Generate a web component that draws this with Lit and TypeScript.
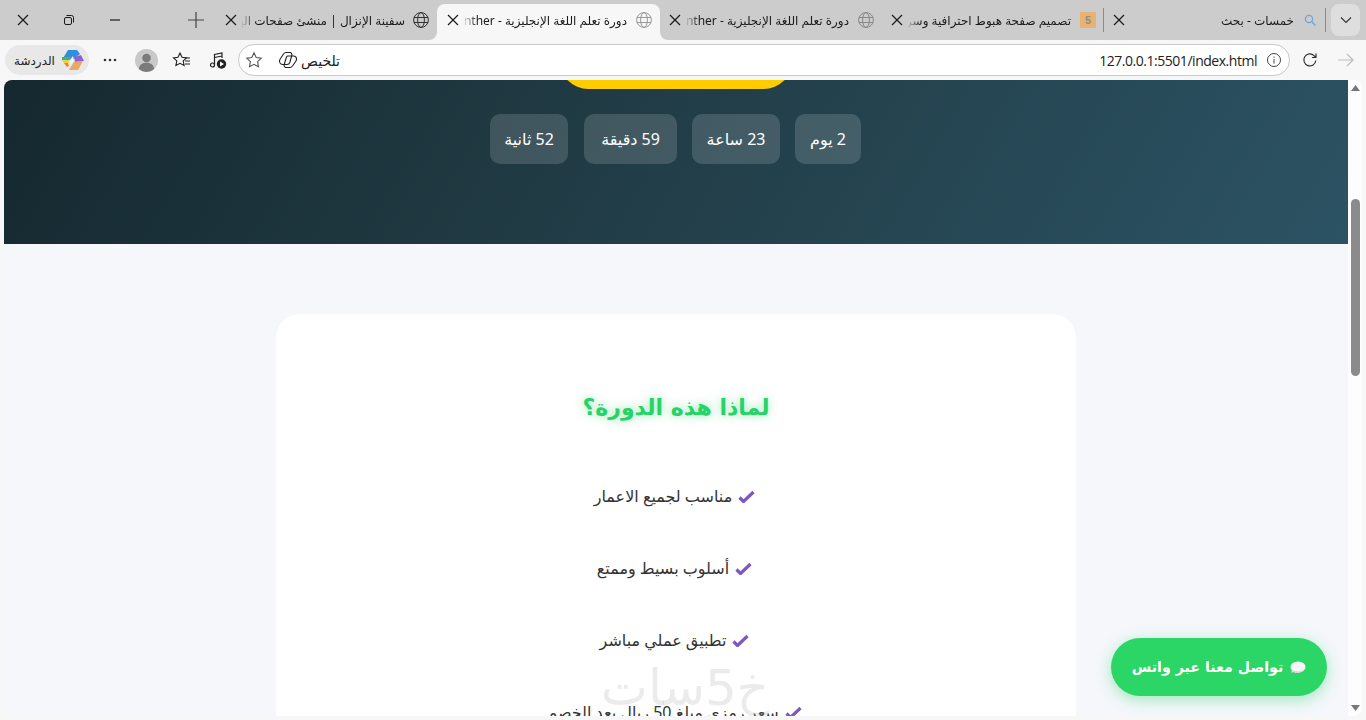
import { LitElement, html, css } from "lit";
import { customElement } from "lit/decorators.js";

const closeIcon = html`<svg class="x" width="12" height="12" viewBox="0 0 12 12"><path d="M1 1l10 10M11 1L1 11" stroke="#1a1a1a" stroke-width="1.2" fill="none"/></svg>`;
const globe = (c: string) => html`<svg class="fav" width="16" height="16" viewBox="0 0 16 16" fill="none" stroke="${c}" stroke-width="1"><circle cx="8" cy="8" r="7.4"/><ellipse cx="8" cy="8" rx="3.4" ry="7.4"/><path d="M1 5.5h14M1 10.5h14"/></svg>`;
const check = html`<svg class="check" width="17" height="13" viewBox="0 0 17 13"><path d="M1.5 7.5l4 4L15.5 2" fill="none" stroke="#7e57c2" stroke-width="3.2" stroke-linejoin="round"/></svg>`;

@customElement("app-root")
export class AppRoot extends LitElement {
  static styles = css`
    :host { display: flex; flex-direction: column; width: 1366px; height: 720px; overflow: hidden; position: relative; background: #f7f7f7; font-family: "Noto Sans", "DejaVu Sans", sans-serif; }
    .strip { display: flex; height: 40px; background: #cccccc; flex: none; }
    .win { width: 46px; display: flex; align-items: center; justify-content: center; }
    .newtab { width: 80px; display: flex; align-items: center; justify-content: flex-end; padding-right: 14px; box-sizing: border-box; }
    .tabs { display: flex; background: #f7f7f7; }
    .tab { display: flex; align-items: center; background: #cccccc; height: 40px; box-sizing: border-box; padding: 0 8px 0 9px; color: #1a1a1a; font-size: 12px; position: relative; }
    .tab .x { flex: none; }
    .tab .title { flex: 1; min-width: 0; margin: 0 9px 0 4px; overflow: hidden; white-space: nowrap; direction: rtl; text-align: right; -webkit-mask-image: linear-gradient(to right, transparent 0, #000 14px); mask-image: linear-gradient(to right, transparent 0, #000 14px); }
    .tab .fav { flex: none; }
    .w1 { width: 219px; padding-left: 7px; border-bottom-right-radius: 8px; }
    .w1 .title, .w5 .title { margin-right: 8px; }
    .w2 { width: 223px; padding: 0; }
    .w3 { width: 222px; border-bottom-left-radius: 8px; }
    .w4, .w5 { width: 222px; }
    .w4::after, .w5::after { content: ""; position: absolute; right: 0; top: 8px; height: 24px; width: 1px; background: #8c8c8c; }
    .active { display: flex; align-items: center; width: 100%; height: 36px; margin-top: 4px; padding: 0 8px 4px 10px; box-sizing: border-box; background: #f7f7f7; border-radius: 8px 8px 0 0; }
    .favbox { width: 16px; height: 16px; background: #e9b36f; color: #8d8d8d; font: 700 11px/16px "Liberation Sans", sans-serif; text-align: center; flex: none; }
    .drop { width: 29px; height: 32px; margin: 4px 0 0 5px; background: #dedede; border-radius: 8px; display: flex; align-items: center; justify-content: center; flex: none; }

    .bar { display: flex; align-items: center; height: 40px; flex: none; }
    .pill { width: 84px; height: 30px; margin-left: 5px; background: #e8e8e8; border-radius: 15px; display: flex; align-items: center; justify-content: space-between; padding: 0 5px 0 9px; box-sizing: border-box; font-size: 12px; color: #222; direction: ltr; flex: none; }
    .tool { width: 36px; display: flex; align-items: center; justify-content: center; flex: none; }
    .addr { width: 1052px; height: 32px; box-sizing: border-box; margin-left: 2px; border: 1px solid #c9c9c9; border-radius: 16px; background: #fff; display: flex; align-items: center; padding: 0 7px 0 6px; flex: none; font-size: 14px; color: #222; }
    .addr .sum { display: flex; align-items: center; gap: 3px; margin-left: 15px; }
    .url { margin-left: auto; font: 14px "Open Sans", "Liberation Sans", sans-serif; color: #222; margin-right: 9px; letter-spacing: -0.47px; }

    .frame { flex: none; height: 636px; margin: 0 4px; display: flex; border-radius: 8px; overflow: hidden; position: relative; }
    .page { width: 1344px; flex: none; background: #f5f7fb; overflow: hidden; direction: rtl; display: flex; flex-direction: column; align-items: center; font-family: "DejaVu Sans", sans-serif; }
    .hero { width: 100%; height: 164px; flex: none; display: flex; flex-direction: column; align-items: center; background: linear-gradient(120deg, #15282f 0%, #203a43 40%, #2c5364 100%); overflow: hidden; }
    .cta { width: 234px; height: 59px; margin-top: -50px; flex: none; background: #ffcc00; border-radius: 30px; }
    .timer { display: flex; gap: 15px; margin-top: 25px; margin-right: 1px; }
    .cell { height: 50px; display: flex; align-items: center; justify-content: center; border-radius: 10px; background: rgba(255,255,255,.15); color: #fff; font: 16px "Noto Sans", "DejaVu Sans", sans-serif; white-space: nowrap; box-sizing: border-box; }
    .c1 { width: 66px; }
    .c2 { width: 88px; }
    .c3 { width: 93px; margin-left: 1px; }
    .c4 { width: 78px; }
    .card { width: 800px; margin-top: 70px; background: #fff; border-radius: 24px; padding: 70px 0 0; box-sizing: border-box; flex: none; display: flex; flex-direction: column; align-items: center; }
    h2 { margin: 1px 0 -1px; font-size: 22px; line-height: 46px; font-weight: 700; color: #25d366; text-shadow: 0 0 10px rgba(37,211,102,.5); }
    ul { list-style: none; margin: 30px 0 0; padding: 0; }
    li { height: 72px; display: flex; align-items: center; justify-content: center; gap: 6px; padding-right: 3px; font: 16px "Noto Sans", "DejaVu Sans", sans-serif; color: #333; white-space: nowrap; }
    .wm { position: absolute; left: 586px; top: 578px; width: 190px; text-align: center; font: 50px/60px "DejaVu Sans", sans-serif; direction: rtl; color: rgba(170,170,170,.24); pointer-events: none; }
    .fab { position: absolute; left: 1107px; top: 558px; width: 216px; height: 58px; border-radius: 29px; background: #2bd566; box-shadow: 0 4px 15px rgba(37,211,102,.4); color: #fff; font: 700 14.2px "DejaVu Sans", sans-serif; display: flex; align-items: center; justify-content: center; gap: 7px; direction: rtl; white-space: nowrap; }
    .sb { width: 14px; flex: none; background: #fdfdfd; display: flex; flex-direction: column; align-items: center; }
    .thumb { width: 9px; height: 177px; margin-top: 108px; border-radius: 5px; background: #8b8b8b; flex: none; }
    .arr { flex: none; margin-top: 5px; }
    .arr.d { margin-top: auto; margin-bottom: 5px; }
  `;

  private tabTitle(t: string) { return html`<span class="title">${t}</span>`; }

  render() {
    const T = "دورة تعلم اللغة الإنجليزية - Panther";
    return html`
      <div class="strip">
        <div class="win">${closeIcon}</div>
        <div class="win"><svg width="12" height="12" viewBox="0 0 12 12" fill="none" stroke="#1a1a1a"><rect x="1.5" y="3.5" width="7" height="7" rx="1.5"/><path d="M3.5 1.5h5a2 2 0 0 1 2 2v5"/></svg></div>
        <div class="win"><svg width="12" height="12" viewBox="0 0 12 12"><path d="M1 6h10" stroke="#1a1a1a" stroke-width="1.2"/></svg></div>
        <div class="newtab"><svg width="16" height="16" viewBox="0 0 16 16"><path d="M8 0v16M0 8h16" stroke="#444" stroke-width="1.2"/></svg></div>
        <div class="tabs">
          <div class="tab w1">${closeIcon}${this.tabTitle("سفينة الإنزال | منشئ صفحات الهبوط")}${globe("#333")}</div>
          <div class="tab w2"><div class="active">${closeIcon}${this.tabTitle(T)}${globe("#999")}</div></div>
          <div class="tab w3">${closeIcon}${this.tabTitle(T)}${globe("#888")}</div>
          <div class="tab w4">${closeIcon}${this.tabTitle("تصميم صفحة هبوط احترافية وسريعة")}<span class="favbox">5</span></div>
          <div class="tab w5">${closeIcon}${this.tabTitle("خمسات - بحث")}<svg class="fav" width="16" height="16" viewBox="0 0 16 16" fill="none" stroke="#6fa3d8" stroke-width="1.3"><circle cx="7" cy="7" r="3.6"/><path d="M10 10l3.5 3.5"/></svg></div>
        </div>
        <div class="drop"><svg width="12" height="8" viewBox="0 0 12 8"><path d="M1 1.5l5 5 5-5" fill="none" stroke="#333" stroke-width="1.1"/></svg></div>
      </div>

      <div class="bar">
        <div class="pill"><span>الدردشة</span>
          <svg width="23" height="22" viewBox="0 0 23 22"><path d="M7 1h9l3 4-8 6H1z" fill="#2f8fdc"/><path d="M1 8h9l-1 3H1z" fill="#3fb37f"/><path d="M1 11h8l-2 3H3z" fill="#f2cf3c"/><path d="M3 14h4l1 3-2 1z" fill="#e8862f"/><path d="M9 11l3-4 1 5-3 4z" fill="#f3f3f3"/><path d="M13 8l7-2 3 6-9 1z" fill="#8f62cf"/><path d="M13 13l9-1-5 9H8l3-5z" fill="#e9a866"/></svg></div>
        <div class="tool" style="margin-left:3px"><svg width="14" height="4" viewBox="0 0 14 4" fill="#333"><circle cx="2" cy="2" r="1.3"/><circle cx="7" cy="2" r="1.3"/><circle cx="12" cy="2" r="1.3"/></svg></div>
        <div class="tool"><svg width="23" height="23" viewBox="0 0 23 23"><circle cx="11.5" cy="11.5" r="11.5" fill="#c9c9c9"/><circle cx="11.5" cy="9" r="4.3" fill="#7b7b7b"/><path d="M3.8 20c1-5 4-6.200 7.700-6.200s6.700 1.200 7.700 6.200a11.500 11.500 0 0 1-15.400 0z" fill="#7b7b7b"/></svg></div>
        <div class="tool"><svg width="20" height="18" viewBox="0 0 20 18" fill="none" stroke="#222" stroke-width="1.1"><path d="M8 2l2 4.300 4.500.6-3.300 3 .9 4.600L8 12.300 3.900 14.500l.9-4.600-3.300-3L6 6.300z"/><path d="M13 7h5M13 10h5M13 13h5"/></svg></div>
        <div class="tool"><svg width="18" height="18" viewBox="0 0 18 18" fill="none" stroke="#222" stroke-width="1.2"><circle cx="3.500" cy="14" r="2"/><path d="M5.500 14V3.500l7.500-1.500v5M5.500 6.500l7.500-1.500"/><circle cx="12.500" cy="13" r="4.700" fill="#222" stroke="none"/><path d="M11 10.600l4 2.400-4 2.400z" fill="#fff" stroke="none"/></svg></div>
        <div class="addr">
          <svg width="18" height="18" viewBox="0 0 18 18" fill="none" stroke="#555" stroke-width="1.1"><path d="M9 1.800l2.200 4.700 5 .7-3.600 3.500.9 5L9 13.300l-4.500 2.400.9-5L1.800 7.200l5-.7z"/></svg>
          <div class="sum"><svg width="20" height="18" viewBox="0 0 20 18" fill="none" stroke="#222" stroke-width="1.1"><path d="M8 1.500h4c1.500 0 2.200 1.500 1.800 3l-2 7c-.5 1.500-1.500 2-2.800 2H5c-2 0-3.500-1.500-3.500-3.500 0-1 .3-1.500 1-2.500L5.500 3C6.300 2 7 1.500 8 1.500z"/><path d="M9.500 5h6c2 0 3 1.500 3 3.200 0 1-.3 1.600-1 2.600L14.500 15c-.8 1-1.500 1.500-2.500 1.500H8c-1.500 0-2.200-1.500-1.800-3l2-6.500c.2-1 .6-2 1.300-2z"/></svg><span>تلخيص</span></div>
          <span class="url">127.0.0.1:5501/index.html</span>
          <svg width="16" height="16" viewBox="0 0 16 16" fill="none" stroke="#444" stroke-width="1"><circle cx="8" cy="8" r="6.500"/><path d="M8 7v4.500M8 4.500v1.200"/></svg>
        </div>
        <div class="tool" style="margin-left:2px"><svg width="16" height="16" viewBox="0 0 16 16" fill="none" stroke="#333" stroke-width="1.2"><path d="M13.800 8.500a6 6 0 1 1-1.700-4.800L14 5.500M14 1.500v4h-4"/></svg></div>
        <div class="tool"><svg width="16" height="14" viewBox="0 0 16 14" fill="none" stroke="#bdbdbd" stroke-width="1.2"><path d="M0 7h15M9 1l6 6-6 6"/></svg></div>
      </div>

      <div class="frame">
        <div class="page">
          <section class="hero">
            <div class="cta"></div>
            <div class="timer">
              <div class="cell c1">2 يوم</div><div class="cell c2">23 ساعة</div><div class="cell c3">59 دقيقة</div><div class="cell c4">52 ثانية</div>
            </div>
          </section>
          <section class="card">
            <h2>لماذا هذه الدورة؟</h2>
            <ul>
              <li>${check}<span>مناسب لجميع الاعمار</span></li>
              <li>${check}<span>أسلوب بسيط وممتع</span></li>
              <li>${check}<span>تطبيق عملي مباشر</span></li>
              <li>${check}<span>سعر رمزي مبلغ 50 ريال بعد الخصم</span></li>
            </ul>
          </section>
        </div>
        <div class="sb">
          <svg class="arr" width="9" height="6" viewBox="0 0 9 6"><path d="M4.500 0L9 6H0z" fill="#777"/></svg>
          <div class="thumb"></div>
          <svg class="arr d" width="9" height="6" viewBox="0 0 9 6"><path d="M4.500 6L9 0H0z" fill="#777"/></svg>
        </div>
        <div class="wm">خ5سات</div>
        <div class="fab"><svg width="16" height="13" viewBox="0 0 16 13"><ellipse cx="8" cy="6" rx="7.500" ry="5.500" fill="#f6f6f6"/><path d="M1.500 8c2 2.500 9 3.500 13 0-2 4-9 5-11 3l-2 1z" fill="#d9d9d9"/></svg><span>تواصل معنا عبر واتس</span></div>
      </div>
    `;
  }
}
